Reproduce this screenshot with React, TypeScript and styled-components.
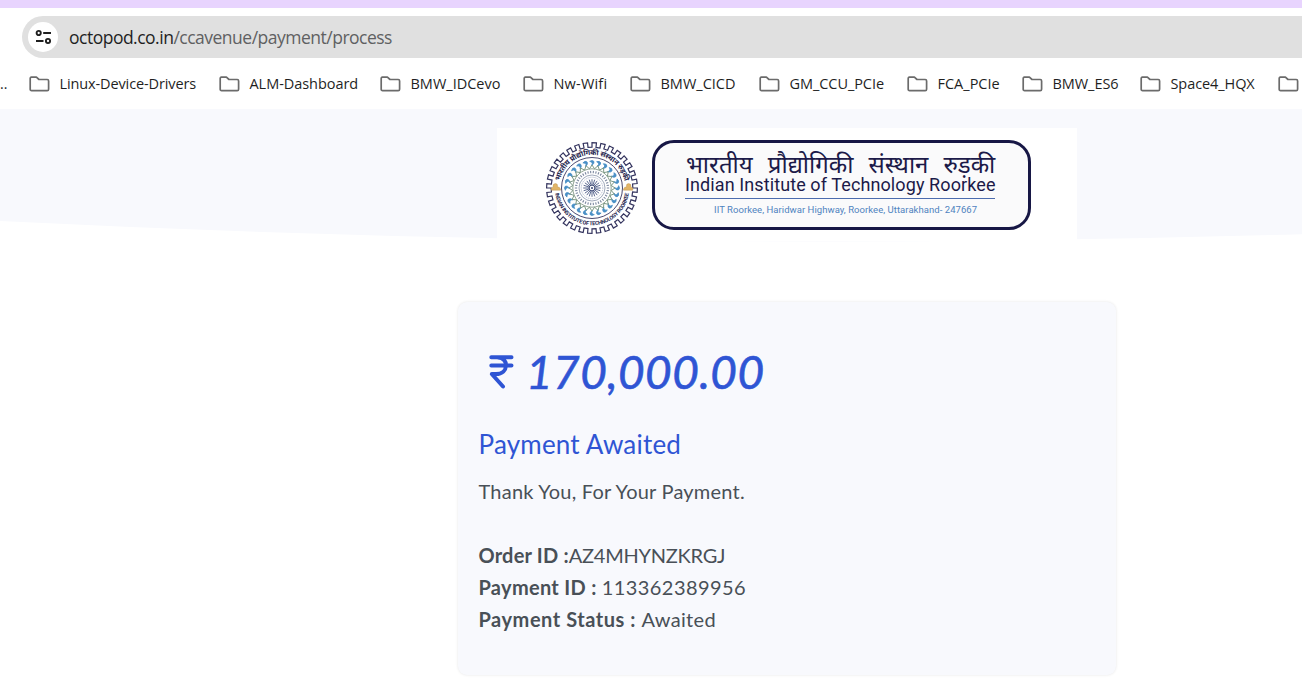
import React from "react";
import styled, { createGlobalStyle } from "styled-components";

const GlobalStyle = createGlobalStyle`
  * { box-sizing: border-box; }
  body { margin: 0; background: #fff; overflow: hidden; }
`;

const Window = styled.div`
  display: flex;
  flex-direction: column;
  width: 1302px;
  height: 685px;
  overflow: hidden;
  background: #fff;
`;

const TabStrip = styled.div`
  height: 8px;
  flex: none;
  background: #e8d4fe;
`;

const Toolbar = styled.div`
  flex: none;
  height: 50px;
  padding: 8px 0 0 22px;
`;

const AddressBar = styled.div`
  display: flex;
  align-items: center;
  height: 42px;
  padding-left: 6px;
  border-radius: 21px 0 0 21px;
  background: #e0e0e0;
`;

const SiteButton = styled.div`
  display: flex;
  align-items: center;
  justify-content: center;
  width: 30px;
  height: 30px;
  margin-right: 11px;
  border-radius: 50%;
  background: #fff;
`;

const Url = styled.div`
  font: 400 17.5px/24px "Open Sans", "Noto Sans", sans-serif;
  letter-spacing: -0.5px;
  white-space: nowrap;
  color: #5f6062;
`;

const Host = styled.span`
  color: #1f1f1f;
`;

const Bookmarks = styled.div`
  display: flex;
  align-items: center;
  flex: none;
  height: 51px;
  overflow: hidden;
`;

const Overflowed = styled.div`
  flex: none;
  width: 29px;
  font: 400 14px/20px "Open Sans", sans-serif;
  color: #1f1f1f;
`;

const Bookmark = styled.div<{ $width: number }>`
  display: flex;
  align-items: center;
  flex: none;
  width: ${(p) => p.$width}px;
`;

const BookmarkName = styled.span<{ $spacing: number }>`
  margin-left: 9.5px;
  font: 400 14.5px/20px "Open Sans", "Noto Sans", sans-serif;
  letter-spacing: ${(p) => p.$spacing}px;
  white-space: nowrap;
  color: #1f1f1f;
`;

const Page = styled.main`
  position: relative;
  flex: 1;
  display: flex;
  flex-direction: column;
  padding-top: 19px;
`;

const Wave = styled.svg`
  position: absolute;
  top: 0;
  left: 0;
`;

const Banner = styled.header`
  position: relative;
  display: flex;
  width: 580px;
  height: 113px;
  margin-left: 497px;
  padding: 12px 0 0 47px;
  background: #fff;
`;

const Plate = styled.div`
  width: 379px;
  height: 90px;
  margin-left: 12px;
  padding: 9px 0 0 31px;
  border: 3px solid #171745;
  border-radius: 22px;
  background: #fafafb;
`;

const HindiName = styled.div`
  width: 310px;
  height: 26px;
  padding-top: 5px;
  font: 400 24px/21px "Noto Sans Devanagari", "Noto Sans", sans-serif;
  word-spacing: 1.3px;
  white-space: nowrap;
  color: #1c1a49;
`;

const EnglishName = styled.div`
  width: 310px;
  height: 21px;
  margin-left: -1px;
  border-bottom: 1px solid #4c6cae;
  font: 400 18px/14px Roboto, sans-serif;
  letter-spacing: 0.1px;
  white-space: nowrap;
  color: #1c1a49;
`;

const Address = styled.div`
  width: 310px;
  padding: 5px 0 0 28px;
  font: 400 9.5px/12px Roboto, sans-serif;
  letter-spacing: 0.05px;
  white-space: nowrap;
  color: #4f83c0;
`;

const Card = styled.section`
  width: 658px;
  height: 373px;
  margin: 61px 0 0 458px;
  padding: 44px 0 0 20.5px;
  border-radius: 9px;
  background: #f8f9fd;
  box-shadow: 0 0 3px rgba(0, 0, 0, 0.1);
`;

const Amount = styled.div`
  display: flex;
  align-items: center;
  height: 52px;
  padding-left: 10.5px;
  color: #2f55d4;
`;

const Figure = styled.span`
  margin-left: 12px;
  font: italic 400 46px/52px Lato, sans-serif;
  letter-spacing: 0.4px;
  -webkit-text-stroke: 0.6px #2f55d4;
`;

const Heading = styled.h1`
  height: 32px;
  margin: 30px 0 0;
  font: 400 26px/32px Lato, sans-serif;
  letter-spacing: 0.2px;
  color: #2f55d4;
`;

const Line = styled.p<{ $gap?: number }>`
  height: 32px;
  margin: ${(p) => p.$gap ?? 0}px 0 0;
  font: 400 20px/32px Lato, sans-serif;
  white-space: pre;
  color: #495057;
`;

const Label = styled.b<{ $spacing: number }>`
  font-weight: 700;
  letter-spacing: ${(p) => p.$spacing}px;
`;

const Value = styled.span<{ $spacing: number }>`
  letter-spacing: ${(p) => p.$spacing}px;
`;

const bookmarks = [
  { name: "Linux-Device-Drivers", width: 190, spacing: -0.12 },
  { name: "ALM-Dashboard", width: 161, spacing: -0.05 },
  { name: "BMW_IDCevo", width: 143, spacing: 0 },
  { name: "Nw-Wifi", width: 107, spacing: 0.2 },
  { name: "BMW_CICD", width: 129, spacing: 0 },
  { name: "GM_CCU_PCIe", width: 148, spacing: -0.06 },
  { name: "FCA_PCIe", width: 115, spacing: 0 },
  { name: "BMW_ES6", width: 118, spacing: -0.06 },
  { name: "Space4_HQX", width: 138, spacing: -0.08 },
  { name: "", width: 30, spacing: 0 },
];

const Folder = () => (
  <svg width="21" height="16" viewBox="0 0 21 16" fill="none" stroke="#6b6b6b" strokeWidth="1.7" strokeLinejoin="round">
    <path d="M2.3 1.2H7.4L10 3.5H18.2Q19.6 3.5 19.6 4.9V13.2Q19.6 14.6 18.2 14.6H2.6Q1.2 14.6 1.2 13.2V2.4Q1.2 1.2 2.3 1.2Z" />
  </svg>
);

const Tune = () => (
  <svg width="17" height="16" viewBox="0 0 17 16" fill="none" stroke="#1f1f1f" strokeWidth="1.9">
    <circle cx="3.7" cy="4" r="2.1" />
    <path d="M8.2 4H16M1 12H8.5" />
    <circle cx="13" cy="12" r="2.1" />
  </svg>
);

const Rupee = () => (
  <svg width="25" height="34" viewBox="0 0 25 34" fill="none" stroke="#2f55d4" strokeWidth="4" strokeLinecap="round" strokeLinejoin="round">
    <path d="M2.3 2.3H22.5M2.3 10.5H22.5M9 2.5C20 2.5 20 19 7 19H2.8L14 31.5" />
  </svg>
);

const polar = (r: number, deg: number) => {
  const a = (deg * Math.PI) / 180;
  return `${(r * Math.cos(a)).toFixed(2)} ${(r * Math.sin(a)).toFixed(2)}`;
};

const gearPath = () => {
  const teeth = 32;
  const step = 360 / teeth;
  const points: string[] = [];
  for (let i = 0; i < teeth; i++) {
    const a = i * step;
    points.push(polar(45.4, a), polar(45.4, a + step / 2), polar(40.8, a + step / 2), polar(40.8, a + step));
  }
  return `M${points.join("L")}Z`;
};

const zigzag = (n: number, r1: number, r2: number) =>
  `M${Array.from({ length: n * 2 }, (_, i) => polar(i % 2 ? r1 : r2, (i * 180) / n)).join("L")}Z`;

const spokes = (n: number, r1: number, r2: number) =>
  Array.from({ length: n }, (_, i) => `M${polar(r1, (i * 360) / n)}L${polar(r2, (i * 360) / n)}`).join("");

const Emblem = () => (
  <svg width="96" height="96" viewBox="-48 -48 96 96" fill="none">
    <defs>
      <path id="arcTop" d="M-33 0A33 33 0 0 1 33 0" />
      <path id="arcBottom" d="M-37.2 0A37.2 37.2 0 0 0 37.2 0" />
    </defs>
    <path d={gearPath()} stroke="#35355f" strokeWidth="1.2" />
    <circle r="30.5" stroke="#35355f" strokeWidth=".9" />
    <text fill="#26264f" fontFamily="'Noto Sans Devanagari', 'Noto Sans', sans-serif" fontSize="7.4" fontWeight="700" textAnchor="middle">
      <textPath href="#arcTop" startOffset="50%" textLength="90">भारतीय प्रौद्योगिकी संस्थान रुड़की</textPath>
    </text>
    <text fill="#26264f" fontFamily="Roboto, sans-serif" fontSize="5.4" fontWeight="700" textAnchor="middle">
      <textPath href="#arcBottom" startOffset="50%" textLength="106">INDIAN INSTITUTE OF TECHNOLOGY ROORKEE</textPath>
    </text>
    {[-1, 1].map((s) => (
      <path key={s} transform={`scale(${s} 1)`} d="M31.5 1Q32.5-1.5 34.5-1Q34-4.4 36.5-4.4Q39.4-4.4 38.9-1L40.8 0V2.2H31.5Z" fill="#e2b567" stroke="#b78d49" strokeWidth=".4" />
    ))}
    {Array.from({ length: 24 }, (_, i) => (
      <g key={i} transform={`rotate(${(i * 360) / 24})`}>
        <path d="M-2.3-26.6Q.6-28.6 2-26.4Q2.6-24.2-.6-22.4Q1-24.6-.2-25.6Q-1.2-26.4-2.3-26.6Z" fill="#4a90c6" stroke="#4a90c6" strokeWidth=".8" />
      </g>
    ))}
    <path d={zigzag(24, 19.4, 23)} stroke="#7d9a86" strokeWidth="1" />
    <circle r="19.2" stroke="#738d79" strokeWidth=".8" />
    <path d={spokes(38, 14.8, 17.2)} stroke="#7a869e" strokeWidth="1.1" />
    <circle r="13" stroke="#77859e" strokeWidth=".7" />
    <circle r="10.8" stroke="#b2bace" strokeWidth="1" strokeDasharray="1.2 .8" />
    <path d={spokes(20, 3.2, 8.8)} stroke="#4b5985" strokeWidth=".9" />
    <circle r="2.9" fill="#fff" stroke="#34416e" strokeWidth="1" />
    <circle r="1" fill="#34416e" />
  </svg>
);

export default function App() {
  return (
    <Window>
      <GlobalStyle />
      <TabStrip />
      <Toolbar>
        <AddressBar>
          <SiteButton><Tune /></SiteButton>
          <Url><Host>octopod.co.in</Host>/ccavenue/payment/process</Url>
        </AddressBar>
      </Toolbar>
      <Bookmarks>
        <Overflowed>..</Overflowed>
        {bookmarks.map((b) => (
          <Bookmark key={b.name} $width={b.width}>
            <Folder />
            {b.name && <BookmarkName $spacing={b.spacing}>{b.name}</BookmarkName>}
          </Bookmark>
        ))}
      </Bookmarks>
      <Page>
        <Wave width="1302" height="140" viewBox="0 0 1302 140">
          <path d="M0 0H1302V125.2Q651 144.5 0 112Z" fill="#f8f9fd" />
        </Wave>
        <Banner>
          <Emblem />
          <Plate>
            <HindiName>भारतीय&nbsp; प्रौद्योगिकी&nbsp; संस्थान&nbsp; रुड़की</HindiName>
            <EnglishName>Indian Institute of Technology Roorkee</EnglishName>
            <Address>IIT Roorkee, Haridwar Highway, Roorkee, Uttarakhand- 247667</Address>
          </Plate>
        </Banner>
        <Card>
          <Amount><Rupee /><Figure>170,000.00</Figure></Amount>
          <Heading>Payment Awaited</Heading>
          <Line $gap={15}><Value $spacing={0.22}>Thank You, For Your Payment.</Value></Line>
          <Line $gap={32}><Label $spacing={0.2}>Order ID :</Label><Value $spacing={-0.25}>AZ4MHYNZKRGJ</Value></Line>
          <Line><Label $spacing={0.3}>Payment ID : </Label><Value $spacing={0.42}>113362389956</Value></Line>
          <Line><Label $spacing={0.54}>Payment Status : </Label><Value $spacing={0.35}>Awaited</Value></Line>
        </Card>
      </Page>
    </Window>
  );
}
